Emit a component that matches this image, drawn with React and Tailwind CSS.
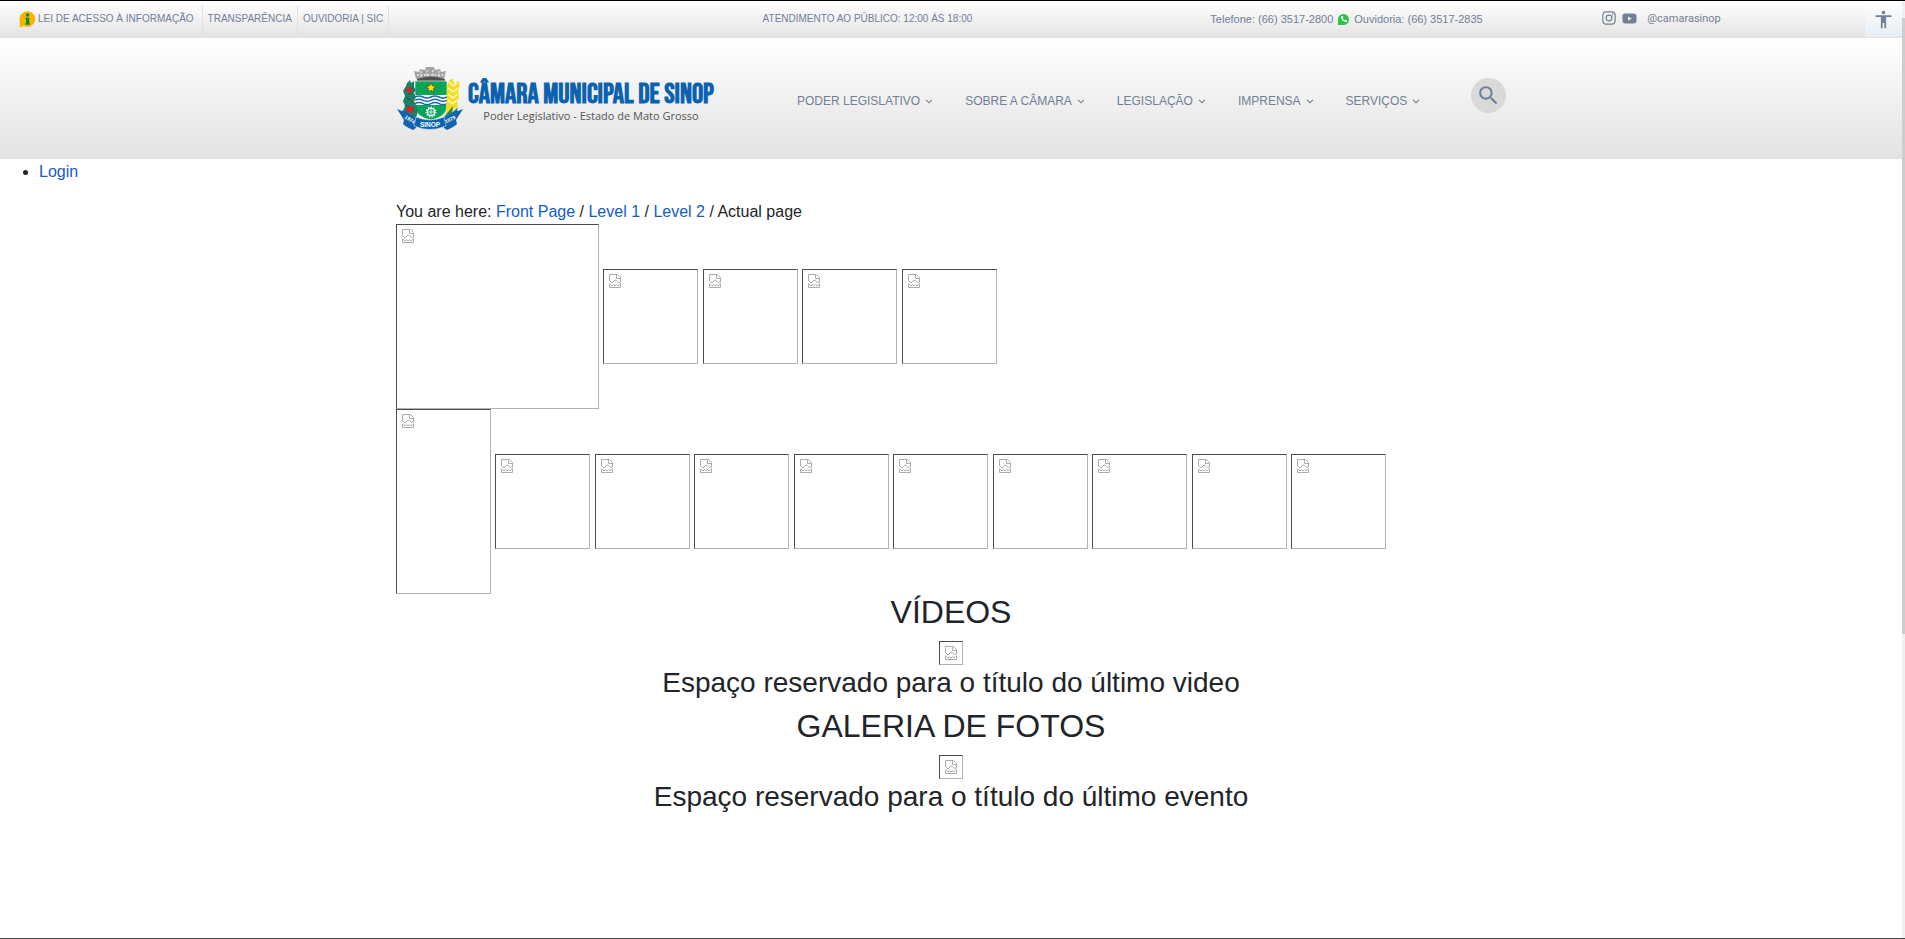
import { Fragment } from "react";
import { BiLogoInstagram, BiLogoYoutube, BiChevronDown } from "react-icons/bi";
import { MdSearch, MdAccessibility } from "react-icons/md";
import { FaPhoneAlt } from "react-icons/fa";

const topLinks = ["TRANSPARÊNCIA", "OUVIDORIA | SIC"];
const menu = ["PODER LEGISLATIVO", "SOBRE A CÂMARA", "LEGISLAÇÃO", "IMPRENSA", "SERVIÇOS"];
const LARGE = "h-[185px] w-[203px]";
const TALL = "h-[185px] w-[95px]";
const SMALL = "size-[95px]";
const rows = [
  [LARGE, SMALL, SMALL, SMALL, SMALL],
  [TALL, SMALL, SMALL, SMALL, SMALL, SMALL, SMALL, SMALL, SMALL, SMALL],
];

function BrokenGlyph() {
  return (
    <svg width="12" height="14" viewBox="0 0 12 14" fill="none" stroke="#acacac" aria-hidden="true">
      <path d="M.5 7V.5H8.500L11.500 3.500V8.500M7.500 .5V4.500H11.500" />
      <path d="M.5 6.500L3 9L6 6L7.500 6.500L9.500 8.500L11.500 7.500" />
      <path d="M.5 9.500V13.500H11.500V9.500" />
      <path d="M.5 10.500H1.500L3 12L4.500 10.500L6 12L7.500 10.500L9 12L10.500 10.500H11.500" />
    </svg>
  );
}

function Picture({ size }) {
  return (
    <span
      role="img"
      className={`inline-block border border-t-[#4c4c4c] border-l-[#4c4c4c] border-r-[#b2b2b2] border-b-[#b2b2b2] pt-1 pl-[5px] align-middle ${size}`}
    >
      <BrokenGlyph />
    </span>
  );
}

function InfoBadge() {
  return (
    <svg width="17" height="17" viewBox="0 0 17 17" aria-hidden="true">
      <path d="M8.500.3a8 7.800 0 1 1-4 14.700L.6 16.400.9 10.500A8 7.800 0 0 1 8.500.3Z" fill="#fbb200" />
      <circle cx="8.600" cy="4" r="1.800" fill="#0b8a3c" />
      <path d="M6.300 6.700H10.300V12.300H10.900V13.800H6.300V12.300H7V8H6.300Z" fill="#0b8a3c" />
    </svg>
  );
}

function WhatsappBadge() {
  return (
    <span className="flex size-[11px] items-center justify-center rounded-full rounded-bl-[3px] bg-[#35c04a]">
      <FaPhoneAlt size={6} color="#fff" />
    </span>
  );
}

function Crest() {
  return (
    <svg width="68" height="64" viewBox="0 0 68 64" aria-hidden="true">
      <path d="M18 4l5 1 1-3 5 1 1-3h8l1 3 5-1 1 3 5-1-2 8H20Z" fill="#a3a3a3" />
      <path d="M21 8H50M25 4V10M31 3V10M37 3V10M43 4V10" stroke="#e7e7e7" strokeWidth="1.300" strokeDasharray="2 1.500" />
      <path d="M21 12Q35 7 49 12V15H21Z" fill="#55504c" />
      <path d="M19 14H51V40Q50 50 35 53Q20 50 19 40Z" fill="#0aa45b" stroke="#fff" strokeWidth=".6" />
      <path d="M19 28H51V38H19Z" fill="#fff" />
      <path d="M19 30q4-2 8 0t8 0 8 0 8 0M19 33.300q4-2 8 0t8 0 8 0 8 0M19 36.600q4-2 8 0t8 0 8 0 8 0" fill="none" stroke="#1767b1" strokeWidth="1.500" />
      <path d="M35 15.500l1.400 3.500 3.800.2-3 2.400 1 3.700-3.200-2.100-3.200 2.100 1-3.700-3-2.400 3.800-.2Z" fill="#ffe800" stroke="#54511a" strokeWidth=".7" />
      <circle cx="35" cy="45" r="3.500" fill="none" stroke="#fff" strokeWidth="1.200" />
      <circle cx="35" cy="45" r="4.800" fill="none" stroke="#fff" strokeWidth="1.200" strokeDasharray="1.500 1.200" />
      <path d="M32 45H38M35 42V48" stroke="#fff" strokeWidth=".8" />
      <path d="M14 13l1 3 3-2v6l2 3-2 3 2 4-2 4 2 4 2 6-2 7-8-1-5-6 2-5-2-5 2-5-2-5 3-5 1-3Z" fill="#1f8064" />
      <path d="M10 22l6 5M10 30l7 5M10 38l8 6M17 20l-4 8" stroke="#0e5d49" />
      <path d="M12 20l3 1 2 3-3 2-3-1-1-2ZM12 40l4-1 2 3-3 4-4-1-1-3Z" fill="#d8232a" />
      <path d="M53 51Q60 36 56 12" fill="none" stroke="#c9b000" />
      <path d="M51 19q3-9 5-7t2 6q4-6 5-3t-1 9q2 6-1 10l1 5-5 4-1 5-5 2q-2-9 0-17Z" fill="#f3de20" />
      <path d="M53 15l4 4 4-3M52 21l5 4 5-4M52 27l5 4 4-4M52 33l4 4 5-4" fill="none" stroke="#fffbd0" strokeWidth="1.200" />
      <path d="M48 50l9-11-1 7 6-6-3 10-10 4Z" fill="#258466" />
      <path d="M1 42l5 2 2-1 13 9-1 9-3 2Q10 60 7 57l1-4Z" fill="#1464ad" />
      <path d="M67 42l-5 2-2-1-13 9 1 9 3 2Q58 60 61 57l-1-4Z" fill="#1464ad" />
      <path d="M20 50Q34 56 48 50L50 59Q34 66 18 59Z" fill="#0d62b0" stroke="#e8f0f8" strokeWidth=".5" />
      <text x="34" y="60" textAnchor="middle" fontFamily="Liberation Sans" fontWeight="700" fontSize="6.500" fill="#fff">SINOP</text>
      <text x="13" y="54" textAnchor="middle" transform="rotate(32 13 54)" fontFamily="Liberation Sans" fontWeight="700" fontSize="5" fill="#fff">1974</text>
      <text x="55" y="54" textAnchor="middle" transform="rotate(-28 55 54)" fontFamily="Liberation Sans" fontWeight="700" fontSize="5" fill="#fff">1979</text>
    </svg>
  );
}

function Feature({ title, caption }) {
  return (
    <section className="flex flex-col items-center">
      <h2 className="mb-[11px] text-[32px] leading-9">{title}</h2>
      <Picture size="size-6" />
      <h3 className="mb-2 text-[28px] leading-[35px]">{caption}</h3>
    </section>
  );
}

export default function App() {
  return (
    <div className="flex min-h-screen border-t border-t-black border-b border-b-[#444] bg-white font-['Liberation_Sans',Arial,sans-serif] text-base text-[#212529]">
      <div className="min-w-0 flex-1">
        <div className="flex h-[37px] bg-linear-to-b from-white to-[#e3e3e3] text-[11px] leading-4 text-[#718096]">
          <div className="grid flex-1 grid-cols-[744fr_448fr_390fr_265fr] items-center pb-px pl-[19px] whitespace-nowrap">
            <div className="flex items-center text-[10px]">
              <a href="#lei" className="flex h-[27px] items-center gap-0.5 border-r border-[#dee2e6] pr-2">
                <InfoBadge />
                LEI DE ACESSO À INFORMAÇÃO
              </a>
              {topLinks.map((t) => (
                <a key={t} href="#top" className="flex h-[27px] items-center border-r border-[#dee2e6] px-[5px]">
                  {t}
                </a>
              ))}
            </div>
            <span className="text-[10px]">ATENDIMENTO AO PÚBLICO: 12:00 ÁS 18:00</span>
            <div className="flex items-center gap-[5px]">
              <span>Telefone: (66) 3517-2800</span>
              <WhatsappBadge />
              <span>Ouvidoria: (66) 3517-2835</span>
            </div>
            <div className="flex items-center">
              <a href="#instagram" aria-label="Instagram" className="pb-0.5"><BiLogoInstagram size={18} /></a>
              <a href="#youtube" aria-label="YouTube" className="pb-0.5 pl-[3px]"><BiLogoYoutube size={17} /></a>
              <span className="pl-[9px] font-[Roboto,sans-serif]">@camarasinop</span>
            </div>
          </div>
          <button type="button" aria-label="Acessibilidade" className="flex h-9 w-[37px] items-center justify-center rounded-b bg-linear-to-b from-[#fdfeff] to-[#e8eef3]">
            <MdAccessibility size={21} />
          </button>
        </div>

        <header className="h-[121px] bg-linear-to-b from-white to-[#e2e2e2]">
          <div className="mx-auto flex max-w-[1110px] items-start whitespace-nowrap">
            <a href="#home" className="mt-[29px] flex w-[401px] shrink-0 gap-1">
              <Crest />
              <span className="flex flex-col items-center pt-3.5">
                <span className="font-['Bebas_Neue','Roboto_Condensed','Liberation_Sans_Narrow',sans-serif] text-[28px] leading-[27px] font-bold text-[#0d62b0]">
                  CÂMARA MUNICIPAL DE SINOP
                </span>
                <span className="font-['Open_Sans',sans-serif] text-[11px] leading-4 text-[#555]">
                  Poder Legislativo - Estado de Mato Grosso
                </span>
              </span>
            </a>
            <nav className="mt-[55px] flex gap-[29px] text-xs leading-4 text-[#718096]">
              {menu.map((m) => (
                <a key={m} href="#menu" className="flex items-center gap-0.5">
                  {m}
                  <BiChevronDown size={14} />
                </a>
              ))}
            </nav>
            <button type="button" aria-label="Buscar" className="mt-10 ml-auto flex size-[35px] items-center justify-center rounded-full bg-[#d9d9d9] text-[#718096]">
              <MdSearch size={25} />
            </button>
          </div>
        </header>

        <ul className="mb-4 list-disc pt-px pl-[39px]">
          <li><a href="#login" className="text-[#155bc8]">Login</a></li>
        </ul>

        <main className="mx-auto max-w-[1110px]">
          <nav aria-label="Breadcrumb">
            You are here: <a href="#front" className="text-[#155bc8]">Front Page</a> / <a href="#l1" className="text-[#155bc8]">Level 1</a> / <a href="#l2" className="text-[#155bc8]">Level 2</a> / Actual page
          </nav>
          {rows.map((row, r) => (
            <div key={r}>
              {row.map((size, i) => (
                <Fragment key={i}>
                  <Picture size={size} />{" "}
                </Fragment>
              ))}
            </div>
          ))}
          <Feature title="VÍDEOS" caption="Espaço reservado para o título do último video" />
          <Feature title="GALERIA DE FOTOS" caption="Espaço reservado para o título do último evento" />
        </main>
      </div>
      <div className="flex w-[3px] flex-col bg-[#f0f0f0] pt-[17px]" aria-hidden="true">
        <div className="h-[67%] bg-[#cdcdcd]" />
      </div>
    </div>
  );
}
